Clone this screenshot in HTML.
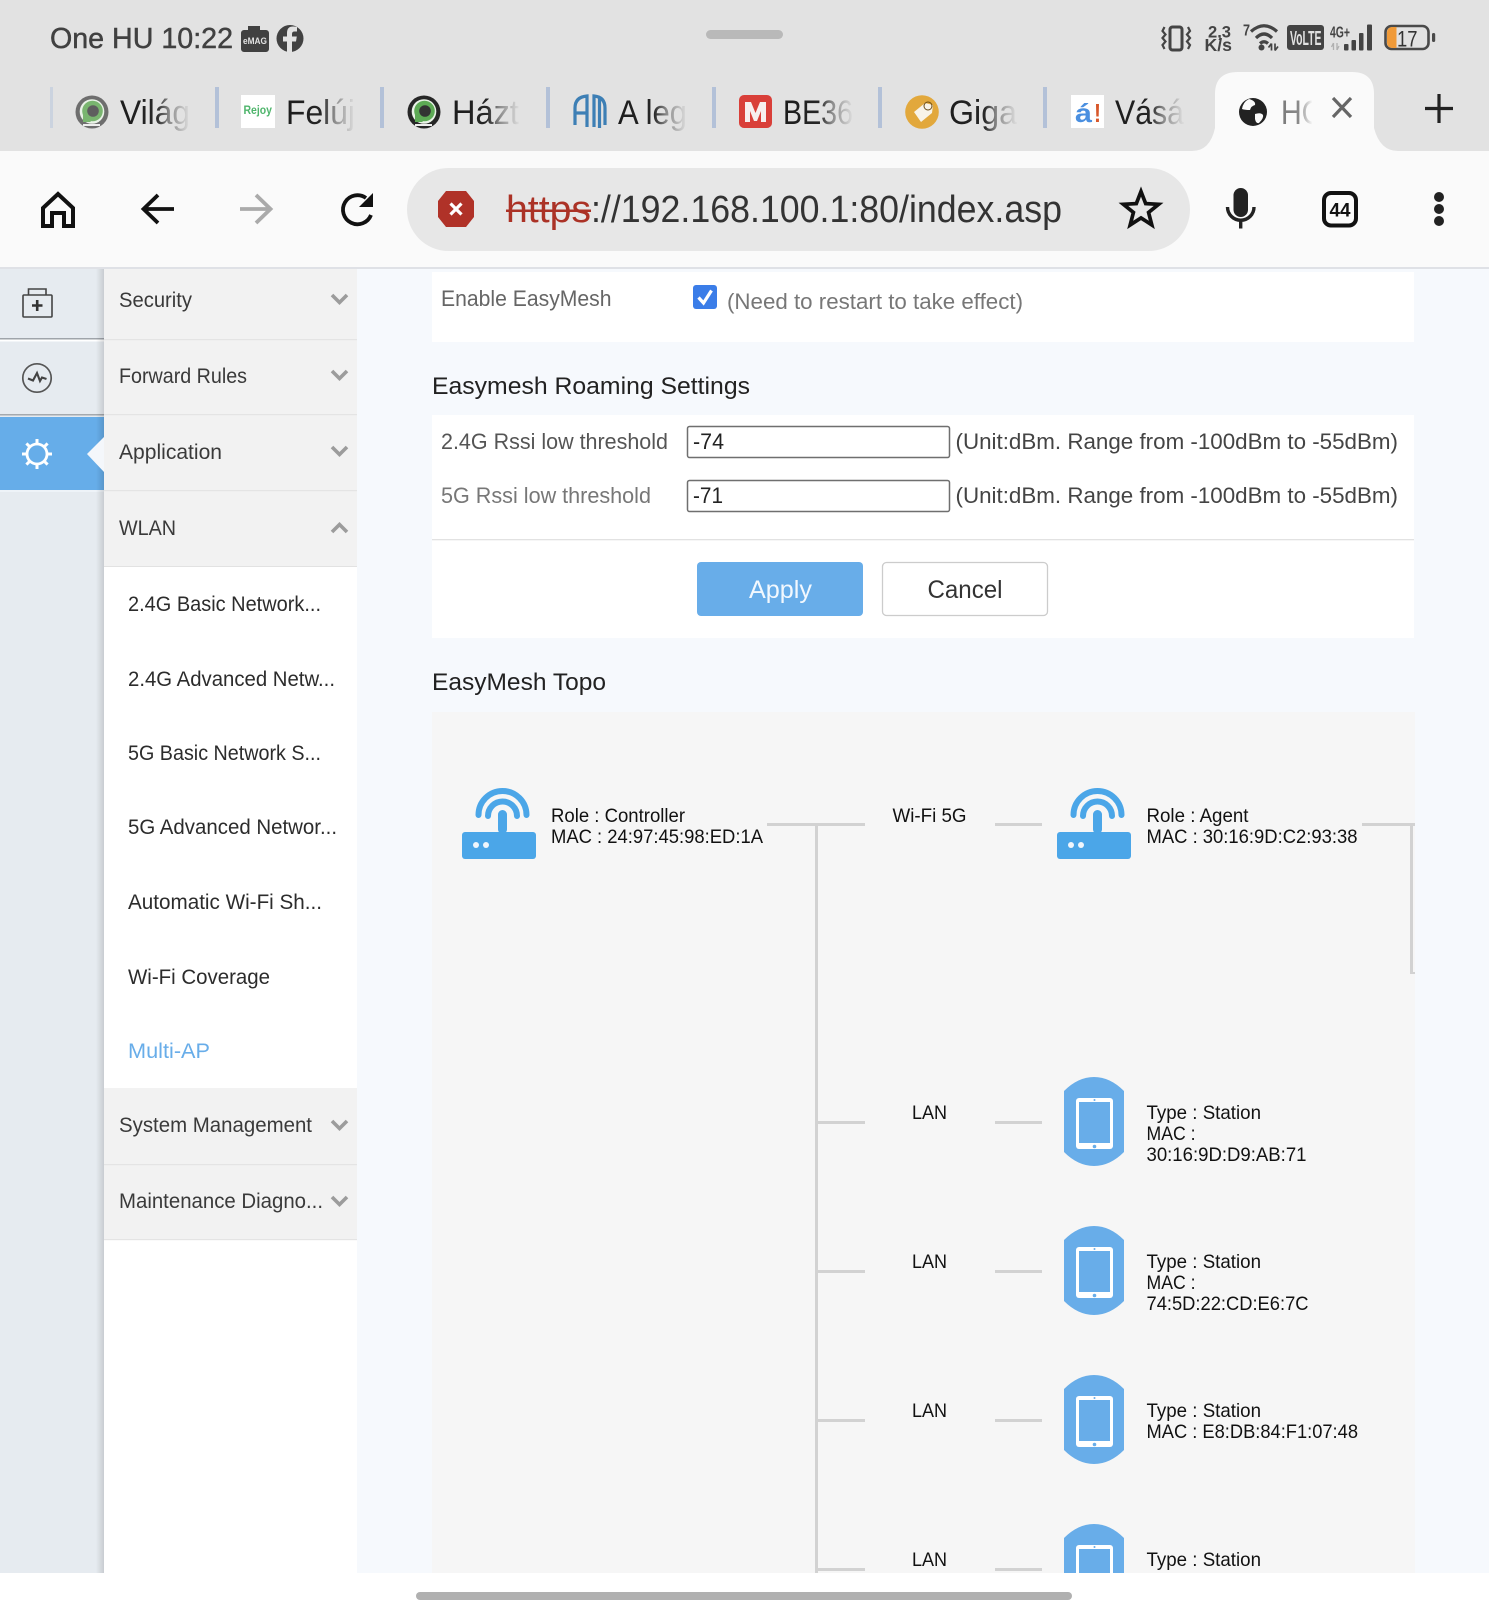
<!DOCTYPE html>
<html lang="en">
<head>
<meta charset="utf-8">
<title>Multi-AP</title>
<style>
html,body{margin:0;padding:0;background:#fff;width:1489px;height:1619px;overflow:hidden}
svg{display:block}
text{font-family:"Liberation Sans",sans-serif;white-space:pre}
</style>
</head>
<body>
<svg xmlns="http://www.w3.org/2000/svg" width="1489" height="1619" viewBox="0 0 1489 1619">
<defs>
<linearGradient id="fade" x1="0" x2="1" y1="0" y2="0"><stop offset="0" stop-color="#1c1c1c"/><stop offset=".52" stop-color="#262626"/><stop offset=".7" stop-color="#8a8a8a"/><stop offset="1" stop-color="#dedede"/></linearGradient>
<linearGradient id="fadeh" x1="0" x2="1" y1="0" y2="0"><stop offset="0" stop-color="#7a7a7a"/><stop offset=".42" stop-color="#8a8a8a"/><stop offset=".72" stop-color="#f6f6f6"/><stop offset="1" stop-color="#fafafa"/></linearGradient>
<linearGradient id="railshade" x1="0" x2="1" y1="0" y2="0"><stop offset="0" stop-color="#000" stop-opacity="0"/><stop offset="1" stop-color="#000" stop-opacity=".13"/></linearGradient>
<clipPath id="hoclip"><rect x="1278" y="90" width="34" height="45"/></clipPath>
<g id="router">
<rect x="462" y="832" width="74" height="27" rx="3" fill="#4ba6e8"/>
<rect x="498" y="810" width="9" height="24" rx="4.500" fill="#4ba6e8"/>
<path d="M478.500 815 A24 24 0 0 1 526.500 815" fill="none" stroke="#4ba6e8" stroke-width="6" stroke-linecap="round"/>
<path d="M488 816 A14.500 14.500 0 0 1 517 816" fill="none" stroke="#4ba6e8" stroke-width="6" stroke-linecap="round"/>
<circle cx="476" cy="845" r="3" fill="#f0f6fc"/><circle cx="486" cy="845" r="3" fill="#f0f6fc"/>
</g>
<g id="tablet">
<path d="M1064 1091 Q1078 1077 1094 1077 Q1110 1077 1124 1091 V1152 Q1110 1166 1094 1166 Q1078 1166 1064 1152 Z" fill="#68ade9"/>
<rect x="1076" y="1098" width="37" height="51" rx="3" fill="#fff"/>
<rect x="1079" y="1102" width="31" height="41" fill="#68ade9"/>
<circle cx="1094.500" cy="1146.500" r="1.800" fill="#68ade9"/>
<circle cx="1094.500" cy="1100" r="1" fill="#68ade9"/>
</g>
<g id="chev"><path d="M332 295 L339.500 302.500 L347 295" fill="none" stroke="#9c9c9c" stroke-width="3.600"/></g>
</defs>

<!-- top chrome -->
<rect width="1489" height="151" fill="#e2e2e2"/>
<rect y="151" width="1489" height="116" fill="#fafafa"/>
<rect y="267" width="1489" height="2" fill="#dfe1e6"/>

<!-- status bar -->
<text x="50" y="48" font-size="29" fill="#414141" stroke="#414141" stroke-width=".45" textLength="183" lengthAdjust="spacingAndGlyphs">One HU 10:22</text>
<path d="M241 33 a3 3 0 0 1 3-3 h4 v-4 h12 v4 h6 a3 3 0 0 1 3 3 v16 a3 3 0 0 1-3 3 h-22 a3 3 0 0 1-3-3z" fill="#414141"/>
<text x="243" y="44" font-size="9" font-weight="bold" fill="#e2e2e2" textLength="24" lengthAdjust="spacingAndGlyphs">eMAG</text>
<circle cx="290" cy="38.500" r="13.500" fill="#414141"/>
<path d="M292 52 V41.500 H296 L296.800 36.500 H292 V34 Q292 31.500 294.500 31.500 H297 V27 Q295 26.500 293 26.500 Q287 26.500 287 33 V36.500 H283 V41.500 H287 V52Z" fill="#e2e2e2"/>
<rect x="706" y="30" width="77" height="9" rx="4.500" fill="#b9b9b9"/>

<rect x="1170" y="27" width="12" height="23" rx="2.500" fill="none" stroke="#444" stroke-width="3"/>
<path d="M1164.500 27 l-2 4 l3 3.500 l-3 3.500 l3 3.500 l-3 3.500 l2 4 M1188 27 l2 4 l-3 3.500 l3 3.500 l-3 3.500 l3 3.500 l-2 4" fill="none" stroke="#444" stroke-width="2.200"/>
<text x="1208" y="37.500" font-size="16.500" font-weight="bold" fill="#444" textLength="23" lengthAdjust="spacingAndGlyphs">2,3</text>
<text x="1204.500" y="51" font-size="17.500" font-weight="bold" fill="#444" textLength="27.500" lengthAdjust="spacingAndGlyphs">K/s</text>
<text x="1243" y="35.500" font-size="15.500" font-weight="bold" fill="#444" textLength="7" lengthAdjust="spacingAndGlyphs">7</text>
<path d="M1251 31.500 Q1264 20 1277 31.500 M1256 38 Q1264 30 1272 38 M1260 43.500 Q1264 40 1268 43.500" fill="none" stroke="#444" stroke-width="3.200"/>
<circle cx="1261.500" cy="47.500" r="3" fill="#444"/>
<path d="M1271.500 50.500 v-7 m-3 4 l3-4 M1275 43.500 v7 m0 0 l3-4" fill="none" stroke="#444" stroke-width="1.700"/>
<rect x="1287" y="25" width="37" height="25" rx="3" fill="#444"/>
<text x="1290" y="45" font-size="20" font-weight="bold" fill="#e2e2e2" textLength="31.500" lengthAdjust="spacingAndGlyphs">VoLTE</text>
<text x="1330" y="37.500" font-size="16" font-weight="bold" fill="#444" textLength="20" lengthAdjust="spacingAndGlyphs">4G+</text>
<path d="M1333.500 50 v-7 m-2 4 l2-4 M1337 43 v7 m0 0 l2-4" fill="none" stroke="#b0b0b0" stroke-width="1.300"/>
<rect x="1344" y="44" width="4.500" height="6.500" rx="1" fill="#444"/><rect x="1351.500" y="40" width="4.500" height="10.500" rx="1" fill="#444"/><rect x="1359" y="33" width="4.500" height="17.500" rx="1" fill="#444"/><rect x="1367" y="24.500" width="5" height="26" rx="1" fill="#444"/>
<rect x="1385.500" y="26" width="43" height="23" rx="6" fill="none" stroke="#4a4a4a" stroke-width="2.600"/>
<path d="M1387 32 a5 5 0 0 1 5-5 h4.500 v21 h-4.500 a5 5 0 0 1-5-5z" fill="#f09a38"/>
<rect x="1432" y="33" width="3.200" height="9" rx="1.500" fill="#4a4a4a"/>
<text x="1397" y="46.500" font-size="22" fill="#333" textLength="20.500" lengthAdjust="spacingAndGlyphs">17</text>

<!-- tab strip -->
<rect x="50" y="87" width="3" height="41" fill="#c6cfde" opacity=".8"/>
<rect x="215" y="87" width="4" height="41" fill="#b3c1d8"/>
<rect x="380" y="87" width="4" height="41" fill="#b3c1d8"/>
<rect x="546" y="87" width="4" height="41" fill="#b3c1d8"/>
<rect x="712" y="87" width="4" height="41" fill="#b3c1d8"/>
<rect x="878" y="87" width="4" height="41" fill="#b3c1d8"/>
<rect x="1043" y="87" width="4" height="41" fill="#b3c1d8"/>

<circle cx="92" cy="112" r="16.500" fill="#6e6e6e"/>
<circle cx="92" cy="111.500" r="12.300" fill="#e9f2e7"/>
<circle cx="92.500" cy="111" r="10.300" fill="#79b56f"/>
<path d="M83 113 v9 h8z" fill="#79b56f"/>
<circle cx="93" cy="111" r="5.800" fill="#5e5e5e"/>
<path d="M83 124 h17 v2 h-17z" fill="#eee"/>
<text x="120" y="124" font-size="34" fill="url(#fade)" textLength="70" lengthAdjust="spacingAndGlyphs">Világ</text>

<rect x="241" y="95" width="34" height="33" fill="#fff"/>
<text x="243.500" y="114" font-size="11.500" font-weight="bold" fill="#4fb56c" textLength="28.500" lengthAdjust="spacingAndGlyphs">Rejoy</text>
<text x="286" y="124" font-size="34" fill="url(#fade)" textLength="69" lengthAdjust="spacingAndGlyphs">Felúj</text>

<circle cx="424" cy="112" r="16.500" fill="#262626"/>
<circle cx="424" cy="111.500" r="12.300" fill="#e9f2e7"/>
<circle cx="424.500" cy="111" r="10.300" fill="#5daa55"/>
<path d="M415 113 v9 h8z" fill="#5daa55"/>
<circle cx="425" cy="111" r="5.800" fill="#333"/>
<path d="M415 124 h17 v2 h-17z" fill="#eee"/>
<text x="452" y="124" font-size="34" fill="url(#fade)" textLength="67" lengthAdjust="spacingAndGlyphs">Házt</text>

<path d="M575 125 V108 Q575 97 587 96 V127 M575 113 H587 M594 127 V96 Q605 97 605 108 V125 M599.500 97 V128" fill="none" stroke="#3d7fb5" stroke-width="3.200"/>
<text x="618" y="124" font-size="34" fill="url(#fade)" textLength="69" lengthAdjust="spacingAndGlyphs">A leg</text>

<rect x="739" y="95" width="33" height="33" rx="5" fill="#d93f39"/>
<path d="M745 122 V102 H751 L755.500 113 L760 102 H766 V122 H761 V111 L757 121 H754 L750 111 V122Z" fill="#f7eeee"/>
<text x="783" y="124" font-size="34" fill="url(#fade)" textLength="70" lengthAdjust="spacingAndGlyphs">BE36</text>

<circle cx="922" cy="112" r="16.800" fill="#e2a83c"/>
<path d="M914 112 L925 103 L933 105 L932 113 L921 122Z" fill="#f8f3e8"/>
<circle cx="928" cy="106" r="4" fill="none" stroke="#6b4b15" stroke-width="1"/>
<text x="949" y="124" font-size="34" fill="url(#fade)" textLength="68" lengthAdjust="spacingAndGlyphs">Giga</text>

<rect x="1071" y="95" width="33" height="33" fill="#fff"/>
<text x="1075" y="122" font-size="26" font-weight="bold" fill="#4a8fe0" textLength="17" lengthAdjust="spacingAndGlyphs">á</text>
<text x="1094" y="122" font-size="26" font-weight="bold" fill="#d8572a" textLength="7" lengthAdjust="spacingAndGlyphs">!</text>
<text x="1115" y="124" font-size="34" fill="url(#fade)" textLength="69" lengthAdjust="spacingAndGlyphs">Vásá</text>

<!-- active tab -->
<path d="M1192 151 Q1210 151 1215 128 V94 Q1215 72 1238 72 H1352 Q1374 72 1374 94 V128 Q1380 151 1398 151Z" fill="#fafafa"/>
<circle cx="1253" cy="112" r="14" fill="#222"/>
<path d="M1249 99 q7 2 6 6 q-4 1-5 5 q-5 0-8-1 q1-7 7-10z M1255 114 q6-2 8 1 q1 3-4 8 q-3 1-4-4z" fill="#fafafa"/>
<g clip-path="url(#hoclip)"><text x="1281" y="124" font-size="34" fill="url(#fadeh)" textLength="43" lengthAdjust="spacingAndGlyphs">HO</text></g>
<path d="M1333 98 L1351 117 M1351 98 L1333 117" stroke="#666" stroke-width="3.200" fill="none"/>
<path d="M1425 108.500 H1453 M1439 94 V123" stroke="#222" stroke-width="3.200" fill="none"/>

<!-- toolbar -->
<path d="M43 226 V208 L58 194 L73 208 V226 H64 V213 H52 V226 Z" fill="none" stroke="#111" stroke-width="4" stroke-linejoin="miter"/>
<path d="M174 209 H145 M158 195 L143.500 209 L158 223" fill="none" stroke="#111" stroke-width="3.800"/>
<path d="M240 209 H270 M256 195 L270.500 209 L256 223" fill="none" stroke="#aaa" stroke-width="3.800"/>
<path d="M371 215 A14.500 14.500 0 1 1 366 198" fill="none" stroke="#111" stroke-width="3.800"/>
<polygon points="373,193 373,207 359,207" fill="#111"/>

<rect x="407" y="168" width="783" height="83" rx="41.500" fill="#e7e7e7"/>
<polygon points="446,191 466,191 474,201 474,217 466,227 446,227 438,217 438,201" fill="#b03228"/>
<path d="M450.500 203.500 L461.500 214.500 M461.500 203.500 L450.500 214.500" stroke="#fff" stroke-width="3.200"/>
<text x="506" y="222" font-size="38" fill="#ab3226" textLength="85" lengthAdjust="spacingAndGlyphs">https</text>
<rect x="506" y="209.500" width="85" height="2.500" fill="#ab3226"/>
<text x="591" y="222" font-size="38" fill="#333" textLength="471" lengthAdjust="spacingAndGlyphs">://192.168.100.1:80/index.asp</text>
<polygon transform="translate(1141 210) scale(.88) translate(-1141 -209)" points="1141,188 1146.300,201.700 1161,202.500 1149.600,211.800 1153.300,226 1141,218 1128.700,226 1132.400,211.800 1121,202.500 1135.700,201.700" fill="none" stroke="#111" stroke-width="4.200"/>

<rect x="1233.500" y="188" width="14.500" height="29" rx="7.250" fill="#222"/>
<path d="M1227.500 207 a13.250 13.250 0 0 0 26.500 0 M1240.700 220 V228.500" fill="none" stroke="#222" stroke-width="3.400"/>
<rect x="1324" y="193" width="32" height="32.500" rx="7" fill="none" stroke="#111" stroke-width="4"/>
<text x="1340" y="216.500" font-size="19" font-weight="bold" fill="#111" text-anchor="middle" textLength="21" lengthAdjust="spacingAndGlyphs">44</text>
<circle cx="1439" cy="197" r="5" fill="#222"/><circle cx="1439" cy="209" r="5" fill="#222"/><circle cx="1439" cy="221" r="5" fill="#222"/>

<!-- page background -->
<rect x="0" y="269" width="1489" height="1304" fill="#f6f9fd"/>

<!-- rail -->
<rect x="0" y="269" width="104" height="1304" fill="#e6ebf0"/>
<rect x="0" y="338" width="104" height="1.500" fill="#9fa4aa"/>
<rect x="0" y="339.500" width="104" height="2" fill="#fff"/>
<rect x="0" y="414" width="104" height="1.500" fill="#a4a9ae"/>
<rect x="0" y="417" width="104" height="73" fill="#66ade9"/>
<rect x="0" y="490" width="104" height="2" fill="#eef3f8"/>
<rect x="96" y="269" width="8" height="1304" fill="url(#railshade)"/>
<polygon points="87,454 104,437 104,472" fill="#f4f7fb"/>

<rect x="23" y="295" width="29" height="22" rx="1" fill="none" stroke="#444" stroke-width="1.600"/>
<path d="M28.500 295 V289 H46 V295" fill="none" stroke="#444" stroke-width="1.600"/>
<path d="M32 305.500 H42.500 M37.200 300 V311" stroke="#333" stroke-width="2.600"/>
<circle cx="37" cy="378" r="14.200" fill="none" stroke="#555" stroke-width="1.700"/>
<path d="M28 378.500 L33 380.500 L37 373 L40 381 L42 377.500 L46.500 379" fill="none" stroke="#444" stroke-width="2.100"/>
<circle cx="37" cy="454" r="10" fill="none" stroke="#fff" stroke-width="2.800"/>
<path d="M37 439 V444 M37 464 V469 M22 454 H27 M47 454 H52 M26.400 443.400 L30 447 M47.600 443.400 L44 447 M26.400 464.600 L30 461 M47.600 464.600 L44 461" stroke="#fff" stroke-width="3"/>

<!-- submenu -->
<rect x="104" y="269" width="253" height="298" fill="#f2f2f2"/>
<rect x="104" y="339" width="253" height="1.200" fill="#e4e4e4"/>
<rect x="104" y="414" width="253" height="1.200" fill="#e4e4e4"/>
<rect x="104" y="490" width="253" height="1.200" fill="#e4e4e4"/>
<rect x="104" y="566" width="253" height="1.400" fill="#e2e2e2"/>
<rect x="104" y="567" width="253" height="1006" fill="#fff"/>
<rect x="104" y="1088" width="253" height="152" fill="#f2f2f2"/>
<rect x="104" y="1164" width="253" height="1.200" fill="#e4e4e4"/>
<rect x="104" y="1239" width="253" height="1.200" fill="#e4e4e4"/>

<g font-size="21" fill="#3a3a3a">
<text x="119" y="307" textLength="73" lengthAdjust="spacingAndGlyphs">Security</text>
<text x="119" y="383" textLength="128" lengthAdjust="spacingAndGlyphs">Forward Rules</text>
<text x="119" y="459" textLength="103" lengthAdjust="spacingAndGlyphs">Application</text>
<text x="119" y="535" textLength="57" lengthAdjust="spacingAndGlyphs">WLAN</text>
<text x="119" y="1132" textLength="193" lengthAdjust="spacingAndGlyphs">System Management</text>
<text x="119" y="1208" textLength="204" lengthAdjust="spacingAndGlyphs">Maintenance Diagno...</text>
</g>
<use href="#chev"/>
<use href="#chev" y="76"/>
<use href="#chev" y="152"/>
<path d="M332 532 L339.500 524.500 L347 532" fill="none" stroke="#9c9c9c" stroke-width="3.600"/>
<use href="#chev" y="826"/>
<use href="#chev" y="902"/>

<g font-size="21" fill="#2c2c2c">
<text x="128" y="611" textLength="193" lengthAdjust="spacingAndGlyphs">2.4G Basic Network...</text>
<text x="128" y="686" textLength="207" lengthAdjust="spacingAndGlyphs">2.4G Advanced Netw...</text>
<text x="128" y="760" textLength="193" lengthAdjust="spacingAndGlyphs">5G Basic Network S...</text>
<text x="128" y="834" textLength="209" lengthAdjust="spacingAndGlyphs">5G Advanced Networ...</text>
<text x="128" y="909" textLength="194" lengthAdjust="spacingAndGlyphs">Automatic Wi-Fi Sh...</text>
<text x="128" y="984" textLength="142" lengthAdjust="spacingAndGlyphs">Wi-Fi Coverage</text>
<text x="128" y="1058" fill="#68ade9" textLength="82" lengthAdjust="spacingAndGlyphs">Multi-AP</text>
</g>

<!-- panels -->
<rect x="432" y="272" width="982" height="70" fill="#fff"/>
<text x="441" y="306" font-size="22" fill="#666" textLength="170.500" lengthAdjust="spacingAndGlyphs">Enable EasyMesh</text>
<rect x="693" y="285" width="24" height="24" rx="3" fill="#3b7de8"/>
<path d="M698.500 297.500 L703.500 303 L711.500 290.500" fill="none" stroke="#fff" stroke-width="3.200"/>
<text x="727" y="309" font-size="22" fill="#777" textLength="296" lengthAdjust="spacingAndGlyphs">(Need to restart to take effect)</text>

<text x="432" y="394" font-size="24" fill="#222" textLength="318" lengthAdjust="spacingAndGlyphs">Easymesh Roaming Settings</text>

<rect x="432" y="415" width="982" height="223" fill="#fff"/>
<text x="441" y="449" font-size="22" fill="#555" textLength="227" lengthAdjust="spacingAndGlyphs">2.4G Rssi low threshold</text>
<text x="441" y="503" font-size="22" fill="#777" textLength="210" lengthAdjust="spacingAndGlyphs">5G Rssi low threshold</text>
<rect x="687.500" y="426.500" width="262" height="31" rx="2" fill="#fff" stroke="#6f6f6f" stroke-width="1.500"/>
<rect x="687.500" y="480.500" width="262" height="31" rx="2" fill="#fff" stroke="#6f6f6f" stroke-width="1.500"/>
<text x="693" y="449" font-size="22" fill="#222" textLength="31" lengthAdjust="spacingAndGlyphs">-74</text>
<text x="693" y="503" font-size="22" fill="#222" textLength="30" lengthAdjust="spacingAndGlyphs">-71</text>
<text x="955.500" y="449" font-size="22" fill="#444" textLength="442.500" lengthAdjust="spacingAndGlyphs">(Unit:dBm. Range from -100dBm to -55dBm)</text>
<text x="955.500" y="503" font-size="22" fill="#444" textLength="442.500" lengthAdjust="spacingAndGlyphs">(Unit:dBm. Range from -100dBm to -55dBm)</text>
<rect x="432" y="539" width="982" height="1.300" fill="#e2e2e2"/>
<rect x="697" y="562" width="166" height="54" rx="4" fill="#68ade9"/>
<text x="749" y="598" font-size="25" fill="#f2f8fe" textLength="63" lengthAdjust="spacingAndGlyphs">Apply</text>
<rect x="882.500" y="562.500" width="165" height="53" rx="4" fill="#fff" stroke="#ccc" stroke-width="1.300"/>
<text x="927.500" y="598" font-size="25" fill="#333" textLength="75" lengthAdjust="spacingAndGlyphs">Cancel</text>

<text x="432" y="690" font-size="24" fill="#222" textLength="174" lengthAdjust="spacingAndGlyphs">EasyMesh Topo</text>

<!-- topo -->
<rect x="432" y="712" width="983" height="861" fill="#f6f6f6"/>
<use href="#router"/>
<use href="#router" x="595"/>
<g font-size="19.500" fill="#111">
<text x="551" y="822" textLength="134" lengthAdjust="spacingAndGlyphs">Role : Controller</text>
<text x="551" y="843" textLength="212" lengthAdjust="spacingAndGlyphs">MAC : 24:97:45:98:ED:1A</text>
<text x="892.500" y="822" textLength="74" lengthAdjust="spacingAndGlyphs">Wi-Fi 5G</text>
<text x="1146.500" y="822" textLength="102" lengthAdjust="spacingAndGlyphs">Role : Agent</text>
<text x="1146.500" y="843" textLength="211" lengthAdjust="spacingAndGlyphs">MAC : 30:16:9D:C2:93:38</text>

<text x="912" y="1119" textLength="35" lengthAdjust="spacingAndGlyphs">LAN</text>
<text x="1146.500" y="1119" textLength="114.500" lengthAdjust="spacingAndGlyphs">Type : Station</text>
<text x="1146.500" y="1140" textLength="49" lengthAdjust="spacingAndGlyphs">MAC :</text>
<text x="1146.500" y="1161" textLength="160" lengthAdjust="spacingAndGlyphs">30:16:9D:D9:AB:71</text>

<text x="912" y="1268" textLength="35" lengthAdjust="spacingAndGlyphs">LAN</text>
<text x="1146.500" y="1268" textLength="114.500" lengthAdjust="spacingAndGlyphs">Type : Station</text>
<text x="1146.500" y="1289" textLength="49" lengthAdjust="spacingAndGlyphs">MAC :</text>
<text x="1146.500" y="1310" textLength="162" lengthAdjust="spacingAndGlyphs">74:5D:22:CD:E6:7C</text>

<text x="912" y="1417" textLength="35" lengthAdjust="spacingAndGlyphs">LAN</text>
<text x="1146.500" y="1417" textLength="114.500" lengthAdjust="spacingAndGlyphs">Type : Station</text>
<text x="1146.500" y="1438" textLength="211.500" lengthAdjust="spacingAndGlyphs">MAC : E8:DB:84:F1:07:48</text>

<text x="912" y="1566" textLength="35" lengthAdjust="spacingAndGlyphs">LAN</text>
<text x="1146.500" y="1566" textLength="114.500" lengthAdjust="spacingAndGlyphs">Type : Station</text>
</g>
<g fill="#d2d2d2">
<rect x="767" y="823" width="98" height="3"/>
<rect x="815" y="824" width="3" height="749"/>
<rect x="995" y="823" width="47" height="3"/>
<rect x="1362" y="823" width="53" height="3"/>
<rect x="1410" y="824" width="3" height="149"/>
<rect x="1410" y="972" width="5" height="2"/>
<rect x="818" y="1121" width="47" height="3"/><rect x="995" y="1121" width="47" height="3"/>
<rect x="818" y="1270" width="47" height="3"/><rect x="995" y="1270" width="47" height="3"/>
<rect x="818" y="1419" width="47" height="3"/><rect x="995" y="1419" width="47" height="3"/>
<rect x="818" y="1568" width="47" height="3"/><rect x="995" y="1568" width="47" height="3"/>
</g>
<use href="#tablet"/>
<use href="#tablet" y="149"/>
<use href="#tablet" y="298"/>
<use href="#tablet" y="447"/>

<!-- bottom gesture bar -->
<rect x="0" y="1573" width="1489" height="46" fill="#fff"/>
<rect x="416" y="1592" width="656" height="8" rx="4" fill="#b0b0b0"/>
</svg>
</body>
</html>
